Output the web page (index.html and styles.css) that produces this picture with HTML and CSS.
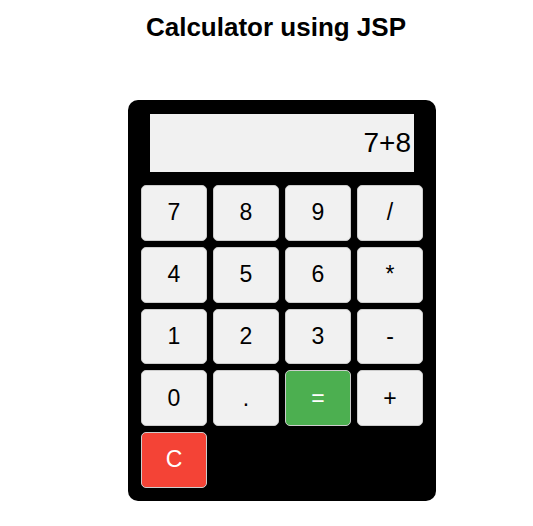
FILE: index.html
```html
<!DOCTYPE html>
<html>
<head>
<meta charset="utf-8">
<title>Calculator using JSP</title>
<link rel="stylesheet" href="styles.css">
</head>
<body>
<h1 class="title">Calculator using JSP</h1>
<div class="calculator">
  <div class="display">7+8</div>
  <div class="keys">
    <button class="key">7</button>
    <button class="key">8</button>
    <button class="key">9</button>
    <button class="key">/</button>
    <button class="key">4</button>
    <button class="key">5</button>
    <button class="key">6</button>
    <button class="key">*</button>
    <button class="key">1</button>
    <button class="key">2</button>
    <button class="key">3</button>
    <button class="key">-</button>
    <button class="key">0</button>
    <button class="key">.</button>
    <button class="key equals">=</button>
    <button class="key">+</button>
    <button class="key clear">C</button>
  </div>
</div>
</body>
</html>
```
FILE: styles.css
```css
html, body {
  margin: 0;
  padding: 0;
  background: #fff;
}
body {
  font-family: "Liberation Sans", Arial, sans-serif;
  color: #000;
}
.title {
  margin: 12px 0 0 19px;
  font-size: 26px;
  line-height: 30px;
  font-weight: bold;
  text-align: center;
}
.calculator {
  width: 308px;
  box-sizing: border-box;
  margin: 58px 0 0 128px;
  padding: 14px 13px 13px;
  background: #000;
  border-radius: 10px;
}
.display {
  margin: 0 9px;
  height: 58px;
  background: #f1f1f1;
  font-size: 28px;
  line-height: 58px;
  text-align: right;
  padding-right: 3px;
}
.keys {
  margin-top: 13px;
  display: grid;
  grid-template-columns: repeat(4, 66px);
  grid-auto-rows: 55.75px;
  column-gap: 6px;
  row-gap: 6px;
}
.key {
  margin: 0;
  padding: 0;
  font-family: "Liberation Sans", Arial, sans-serif;
  font-size: 23px;
  color: #000;
  background: #f1f1f1;
  border: 1px solid #ccc;
  border-radius: 5px;
}
.equals {
  background: #4caf50;
  color: #fff;
}
.clear {
  background: #f44336;
  color: #fff;
}
```
